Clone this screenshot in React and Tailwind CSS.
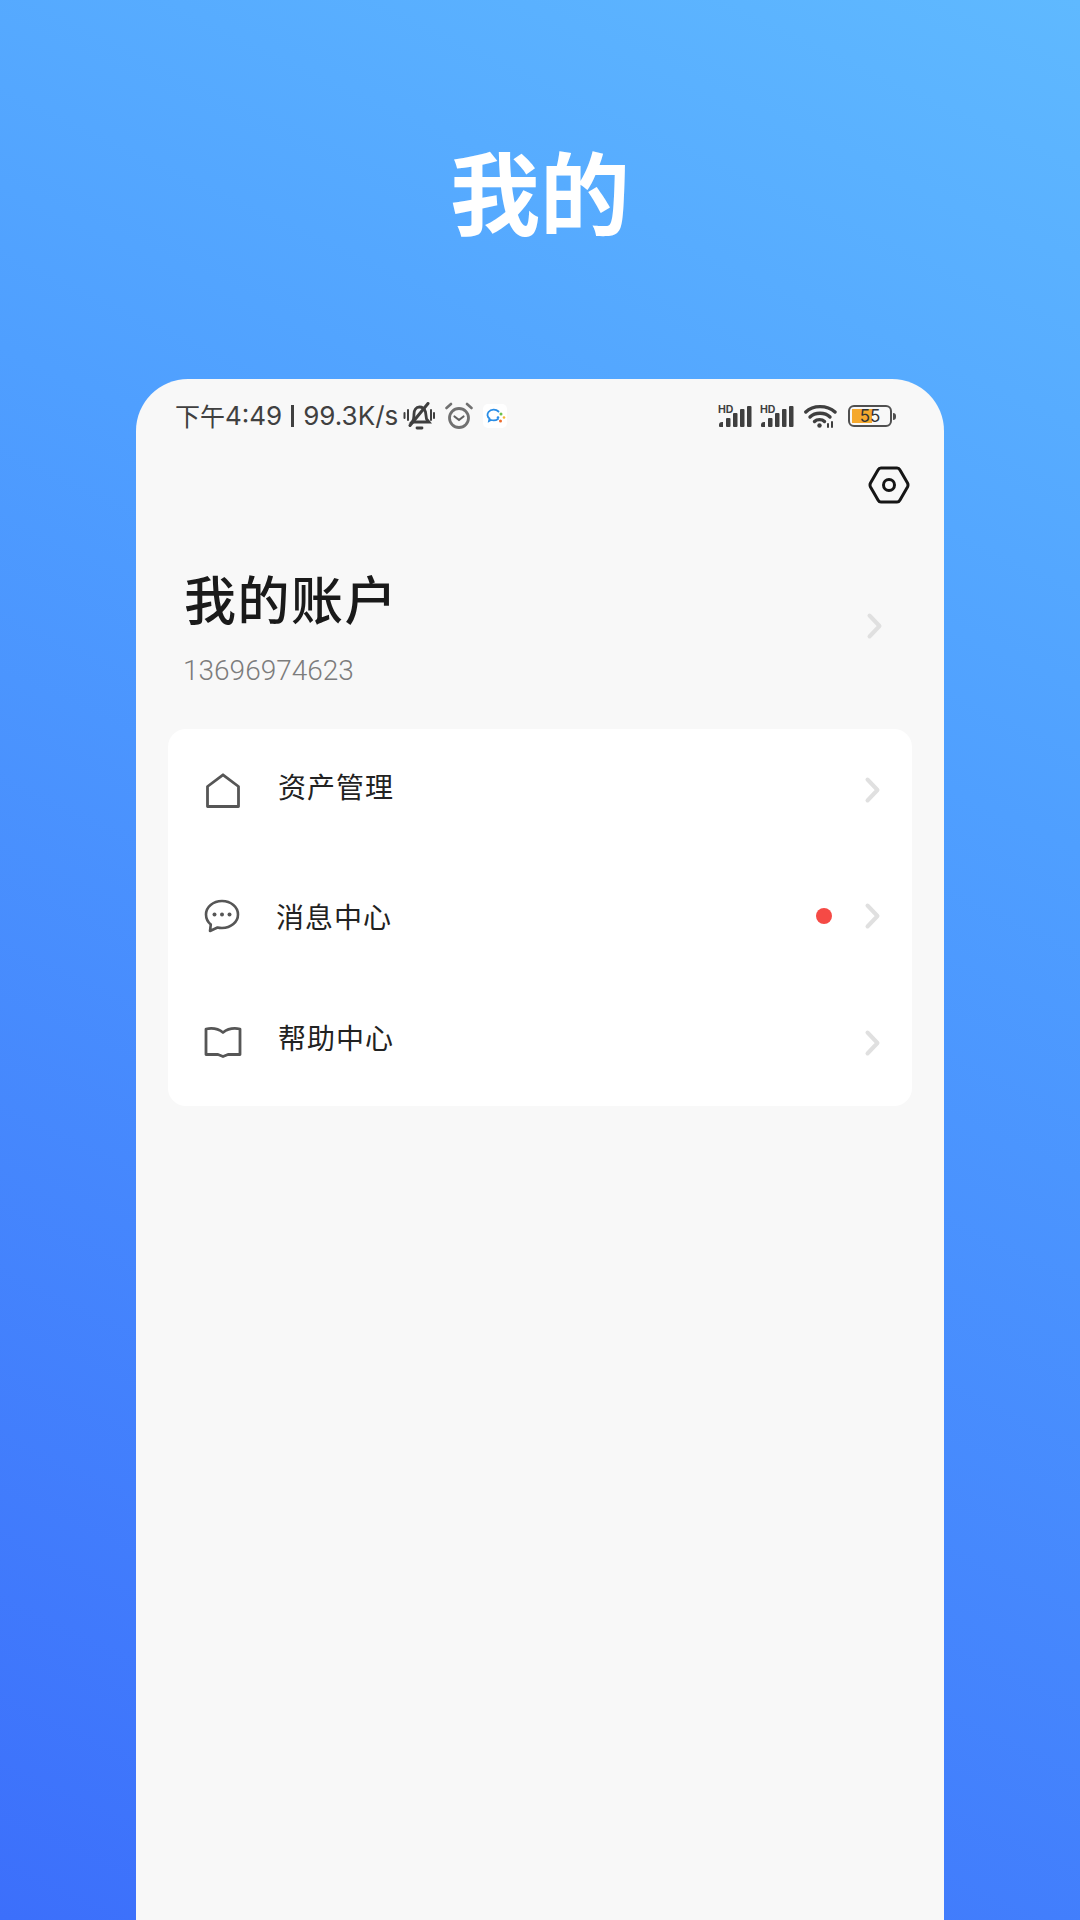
const cjk = { fontFamily: '"Noto Sans CJK SC", "Noto Sans", sans-serif' };
const latin = { fontFamily: 'Roboto, "Noto Sans CJK SC", sans-serif' };
const status = { fontFamily: 'Inter, "Noto Sans CJK SC", sans-serif' };

function Chevron({ className }) {
  return (
    <svg className={className} width="18" height="28" viewBox="0 0 18 28" fill="none">
      <path d="M3.5 3.5 L13.5 14 L3.5 24.5" stroke="#e0e0e0" strokeWidth="4" strokeLinecap="round" strokeLinejoin="round" />
    </svg>
  );
}

function Signal() {
  return (
    <svg className="mt-[-6px]" width="34" height="28" viewBox="0 -6 34 28" fill="#3f3f3f">
      <text x="0" y="8" fontSize="10.500" fontWeight="700" fontFamily="Inter, Roboto, sans-serif">HD</text>
      <path d="M1 20a3 3 0 0 1 3-3h1v5H2a1 1 0 0 1-1-1z" />
      <rect x="8" y="13" width="4.500" height="9" rx="1" />
      <rect x="15" y="8" width="4.500" height="14" rx="1" />
      <rect x="22" y="4" width="4.500" height="18" rx="1" />
      <rect x="29" y="1" width="4.500" height="21" rx="1" />
    </svg>
  );
}

function Row({ icon, label, textClass, rowClass, dot, chevClass, iconClass }) {
  return (
    <div className={"flex items-center " + rowClass}>
      <div className={"w-[110px] shrink-0 flex " + iconClass}>{icon}</div>
      <div className={"text-[28px] leading-[40px] tracking-[1px] font-normal text-[#222222] " + textClass} style={cjk}>{label}</div>
      <div className="flex-1" />
      {dot && <div className="w-4 h-4 rounded-full bg-[#f54a45] mr-[32px]" />}
      <Chevron className={"mr-[30px] " + chevClass} />
    </div>
  );
}

export default function App() {
  return (
    <div className="w-[1080px] h-[1920px] overflow-hidden flex flex-col items-center bg-[linear-gradient(205deg,#5fb9ff_0%,#4f9fff_35%,#3c6ffb_100%)]">
      <div className="h-[379px] shrink-0 w-full flex justify-center pt-[129px]">
        <h1 className="text-[90px] leading-[120px] font-bold text-white" style={cjk}>我的</h1>
      </div>
      <div className="w-[808px] flex-1 bg-[#f8f8f8] rounded-t-[52px] flex flex-col px-[32px]">
        <div className="h-[74px] flex items-center justify-between pl-[7px] pr-[16px]">
          <div className="flex items-center text-[26px] leading-[30px] text-[#404040]" style={status}>
            <span className="text-[25px] mt-[-2px]" style={cjk}>下午</span>
            <span>4:49</span>
            <span className="mx-[9px] w-[3px] h-[22px] bg-[#404040]" />
            <span>99.3K/s</span>
            <svg className="ml-[5px]" width="32" height="28" viewBox="0 0 32 28" fill="none" stroke="#3f3f3f" strokeWidth="2.800" strokeLinecap="round">
              <path d="M9 20c2-2 2-4 2-8 0-4 2-7 5.500-7s5 2 6 5l1 7 2.500 3H9z" />
              <path d="M25 1.500 L7 23.500" strokeWidth="3" />
              <path d="M14 26h5" />
              <path d="M1.500 11v5M5 8v10M28 8v10M31 11v5" strokeWidth="2" />
            </svg>
            <svg className="ml-[10px]" width="28" height="28" viewBox="0 0 28 28" fill="none" stroke="#707070" strokeWidth="2.800" strokeLinecap="round" strokeLinejoin="round">
              <circle cx="14" cy="16" r="9.500" />
              <path d="M9.500 14.500 L14 18 L18.500 14.500" strokeWidth="2.200" stroke="#606060" />
              <path d="M1.500 6 L6 2M26.500 6 L22 2" strokeWidth="2.600" />
            </svg>
            <svg className="ml-[10px]" width="24" height="24" viewBox="0 0 24 24" fill="none">
              <rect width="24" height="24" rx="5" fill="#ffffff" />
              <path d="M15 15c-2 1.500-5 1.500-7 1l-2 1 .5-2.500C4 13 4 10 5.500 8 8 5 13 5 15.500 7.500" stroke="#2a8ee6" strokeWidth="1.800" strokeLinecap="round" />
              <circle cx="18" cy="10" r="1.500" fill="#6cc04a" />
              <circle cx="21" cy="13.500" r="1.300" fill="#f5b731" />
              <circle cx="17.500" cy="17" r="1.500" fill="#ee6a2c" />
              <circle cx="15" cy="13.500" r="1.300" fill="#2a8ee6" />
            </svg>
          </div>
          <div className="flex items-center">
            <Signal />
            <span className="w-[8px]" />
            <Signal />
            <svg className="ml-[10px]" width="33" height="24" viewBox="0 0 33 24" fill="none" stroke="#3f3f3f" strokeWidth="3.400" strokeLinecap="round">
              <path d="M1.800 8C9 0.800 23 0.800 31 8" />
              <path d="M6 13C11 8 21 8 26 13" />
              <path d="M10.500 17.500C13 15 18 15 20.500 17.500" />
              <circle cx="15.500" cy="21.500" r="2.200" fill="#3f3f3f" stroke="none" />
              <path d="M24 20v3M28 18v5" strokeWidth="2" />
            </svg>
            <div className="ml-[11px] w-[44px] h-[22px] rounded-[6px] border-2 border-[#505050] relative overflow-hidden">
              <div className="ml-[2px] mt-[2px] h-[14px] w-[20px] bg-[#f5a92e]" />
              <span className="absolute inset-0 flex items-center justify-center text-[17px] leading-none text-[#333333]" style={status}>55</span>
            </div>
            <div className="ml-[1px] w-[3px] h-[7px] rounded-r-sm bg-[#505050]" />
          </div>
        </div>

        <div className="flex justify-end h-[48px] items-center mt-[8px]">
          <svg width="42" height="38" viewBox="0 0 42 38" fill="none" stroke="#161616" strokeWidth="3" strokeLinejoin="round" className="mr-[2px]">
            <path d="M13 2H29Q31 2 32 4L39.500 17Q40.500 19 39.500 21L32 34Q31 36 29 36H13Q11 36 10 34L2.500 21Q1.500 19 2.500 17L10 4Q11 2 13 2Z" />
            <circle cx="21" cy="19" r="5.500" />
          </svg>
        </div>

        <div className="flex items-center justify-between pl-[14px] pr-[28px] mt-[54px]">
          <div>
            <div className="pl-[2px] text-[52px] leading-[70px] font-medium tracking-[1.500px] text-[#1a1a1a]" style={cjk}>我的账户</div>
            <div className="pl-[1px] text-[28px] leading-[40px] mt-[18px] text-[#7c7c7c] font-light" style={latin}>13696974623</div>
          </div>
          <Chevron className="mt-[-2px]" />
        </div>

        <div className="bg-white rounded-[18px] mt-[38px] h-[377px] flex flex-col">
          <Row rowClass="h-[122px]" iconClass="pl-[38px]" textClass="mb-[8px]" chevClass="" icon={
            <svg width="34" height="35" viewBox="0 0 34 35" fill="none" stroke="#565656" strokeWidth="2.800" strokeLinejoin="round"><path d="M1.500 33.500V13.500L17 1.800L32.500 13.500V33.500Z" /></svg>
          } label="资产管理" />
          <Row rowClass="h-[130px]" iconClass="pl-[36px]" textClass="ml-[-2px]" chevClass="" dot icon={
            <svg width="36" height="34" viewBox="0 0 36 34" fill="none"><path d="M18 2C9 2 2 8 2 15.500c0 4 1.800 7.500 4.800 10l-.8 6.500 7.500-3.500c1.500.4 3 .5 4.500.5 9 0 16-6 16-13.500S27 2 18 2Z" stroke="#565656" strokeWidth="2.600" strokeLinejoin="round" /><circle cx="10.500" cy="15.500" r="2" fill="#565656" /><circle cx="18" cy="15.500" r="2" fill="#565656" /><circle cx="25.500" cy="15.500" r="2" fill="#565656" /></svg>
          } label="消息中心" />
          <Row rowClass="h-[125px]" iconClass="pl-[36px]" chevClass="mt-[-1px]" textClass="mb-[14px]" icon={
            <svg className="mt-[-3px]" width="38" height="32" viewBox="0 0 38 32" fill="none" stroke="#565656" strokeWidth="2.800" strokeLinejoin="round"><path d="M2 3C8 1.800 14 2.500 19 6.500C24 2.500 30 1.800 36 3V28.500H24L19 30.500L14 28.500H2Z" /></svg>
          } label="帮助中心" />
        </div>
      </div>
    </div>
  );
}
